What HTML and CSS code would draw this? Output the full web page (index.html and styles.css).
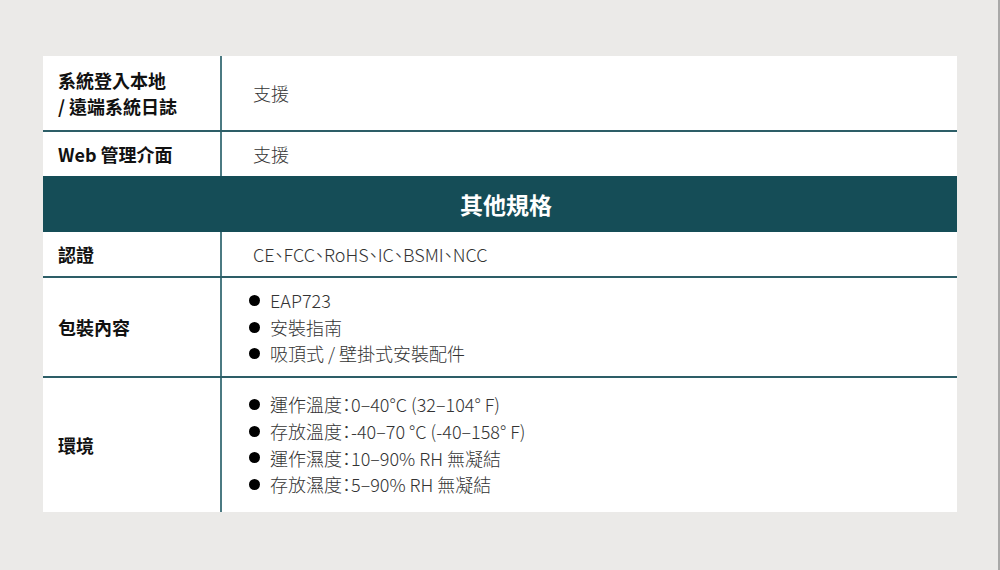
FILE: index.html
```html
<!DOCTYPE html>
<html lang="zh-Hant">
<head>
<meta charset="utf-8">
<title>規格</title>
<link rel="stylesheet" href="styles.css">
</head>
<body>
<div class="page">
  <div class="spec">
    <div class="row row-tall">
      <div class="label">系統登入本地<br>/ 遠端系統日誌</div>
      <div class="value">支援</div>
    </div>
    <div class="row row-plain">
      <div class="label">Web 管理介面</div>
      <div class="value">支援</div>
    </div>
    <div class="section">其他規格</div>
    <div class="row">
      <div class="label">認證</div>
      <div class="value">CE、FCC、RoHS、IC、BSMI、NCC</div>
    </div>
    <div class="row">
      <div class="label">包裝內容</div>
      <div class="value">
        <ul class="list">
          <li><span class="dot"></span>EAP723</li>
          <li><span class="dot"></span>安裝指南</li>
          <li><span class="dot"></span>吸頂式 / 壁掛式安裝配件</li>
        </ul>
      </div>
    </div>
    <div class="row row-env row-last">
      <div class="label">環境</div>
      <div class="value">
        <ul class="list">
          <li><span class="dot"></span>運作溫度：0–40°C (32–104° F)</li>
          <li><span class="dot"></span>存放溫度：-40–70 °C (-40–158° F)</li>
          <li><span class="dot"></span>運作濕度：10–90% RH 無凝結</li>
          <li><span class="dot"></span>存放濕度：5–90% RH 無凝結</li>
        </ul>
      </div>
    </div>
  </div>
</div>
</body>
</html>
```

FILE: styles.css
```css
* { box-sizing: border-box; }
html, body { margin: 0; padding: 0; }
body {
  background: #ebeae8;
  font-family: "Noto Sans CJK TC", "Noto Sans", sans-serif;
}
.page {
  width: 1000px;
  height: 570px;
  border-right: 2px solid #a9a9a8;
  padding: 56px 0 0 43px;
}
.spec {
  width: 914px;
  background: #ffffff;
}
.row {
  display: grid;
  grid-template-columns: 177px 1fr;
  border-bottom: 2px solid #2d5e67;
}
.row-plain { border-bottom: none; }
.row-last { border-bottom: none; }
.label {
  display: flex;
  align-items: center;
  padding: 9px 15px;
  font-size: 18px;
  line-height: 26px;
  font-weight: 700;
  color: #111;
}
.value {
  display: flex;
  flex-direction: column;
  justify-content: center;
  border-left: 2px solid #4b7a82;
  padding: 9px 0 9px 31px;
  font-size: 18px;
  line-height: 26px;
  font-weight: 300;
  color: #333;
  font-feature-settings: "palt" 1;
}
.row-tall .label, .row-tall .value { padding-top: 11px; padding-bottom: 11px; }
.row-env .label, .row-env .value { padding-top: 13px; padding-bottom: 14px; }
.section {
  height: 56px;
  background: #154d57;
  color: #fff;
  font-size: 23px;
  font-weight: 700;
  display: flex;
  align-items: center;
  justify-content: center;
  padding-left: 12px;
}
.list {
  list-style: none;
  margin: 0 0 0 -4px;
  padding: 0;
}
.list li {
  display: flex;
  align-items: center;
  line-height: 26.7px;
}
.dot {
  width: 11px;
  height: 11px;
  border-radius: 50%;
  background: #000;
  margin-right: 10px;
  flex: none;
}
```
